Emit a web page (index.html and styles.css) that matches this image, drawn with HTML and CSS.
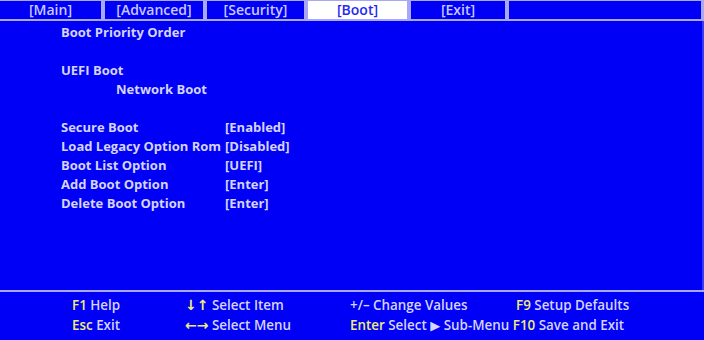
FILE: index.html
```html
<!DOCTYPE html>
<html>
<head>
<meta charset="utf-8">
<link rel="stylesheet" href="styles.css">
</head>
<body>
<div class="screen">
  <div class="tabs">
    <div class="tab">[Main]</div>
    <div class="tab">[Advanced]</div>
    <div class="tab">[Security]</div>
    <div class="tab active">[Boot]</div>
    <div class="tab">[Exit]</div>
    <div class="tab"></div>
  </div>
  <div class="content">
    <div class="row">Boot Priority Order</div>
    <div class="spacer"></div>
    <div class="row">UEFI Boot</div>
    <div class="row indent">Network Boot</div>
    <div class="spacer"></div>
    <div class="row"><span class="label">Secure Boot</span><span>[Enabled]</span></div>
    <div class="row"><span class="label">Load Legacy Option Rom</span><span>[Disabled]</span></div>
    <div class="row"><span class="label">Boot List Option</span><span>[UEFI]</span></div>
    <div class="row"><span class="label">Add Boot Option</span><span>[Enter]</span></div>
    <div class="row"><span class="label">Delete Boot Option</span><span>[Enter]</span></div>
  </div>
  <div class="footer">
    <div class="fcell"><span class="key">F1</span> Help</div>
    <div class="fcell"><span class="key arrow">↓↑</span> Select Item</div>
    <div class="fcell">+/– Change Values</div>
    <div class="fcell"><span class="key">F9</span> Setup Defaults</div>
    <div class="fcell"><span class="key">Esc</span> Exit</div>
    <div class="fcell"><span class="key arrow">←→</span> Select Menu</div>
    <div class="fcell wide"><span class="key">Enter</span> Select <span class="tri">▶</span> Sub-Menu <span class="key">F10</span> Save and Exit</div>
  </div>
</div>
</body>
</html>
```
FILE: styles.css
```css
html, body {
  margin: 0;
  padding: 0;
  background: #0000f6;
}
.screen {
  width: 704px;
  height: 340px;
  display: flex;
  flex-direction: column;
  background: #0000f6;
  font-family: "Open Sans", "Liberation Sans", sans-serif;
  font-weight: 700;
  font-size: 13px;
  color: #d4d4fc;
}
.tabs {
  display: grid;
  grid-template-columns: 101px 98px 97px 99px 94px 192px;
  column-gap: 4px;
  height: 18px;
  padding-top: 1px;
  padding-right: 3px;
  border-bottom: 2px solid #a8a8f4;
  background: #a8a8f4;
}
.tab {
  background: #0000f6;
  color: #c8c8ff;
  text-align: center;
  line-height: 18px;
  font-size: 14px;
  font-weight: 600;
}
.tab.active {
  background: #ffffff;
  color: #2828f0;
}
.content {
  flex: 1;
  padding: 2px 0 0 61px;
  border-right: 2px solid #3a3af8;
}
.row {
  height: 19px;
  line-height: 19px;
  display: flex;
  white-space: nowrap;
}
.indent {
  padding-left: 55px;
}
.spacer {
  height: 19px;
}
.label {
  width: 164px;
}
.footer {
  height: 50px;
  border-top: 2px solid #a8a8f4;
  display: grid;
  grid-template-columns: 113px 165px 166px 180px;
  grid-auto-rows: 20px;
  padding: 3px 0 0 72px;
  box-sizing: border-box;
  font-weight: 600;
  font-size: 13.4px;
  color: #d4d4fc;
}
.fcell {
  white-space: nowrap;
  line-height: 20px;
}
.wide {
  grid-column: span 2;
}
.key {
  color: #eeee78;
}
.arrow {
  font-family: "DejaVu Sans", sans-serif;
  font-weight: 700;
  font-size: 14px;
}
.tri {
  font-family: "DejaVu Sans", sans-serif;
  font-size: 13px;
}
```
